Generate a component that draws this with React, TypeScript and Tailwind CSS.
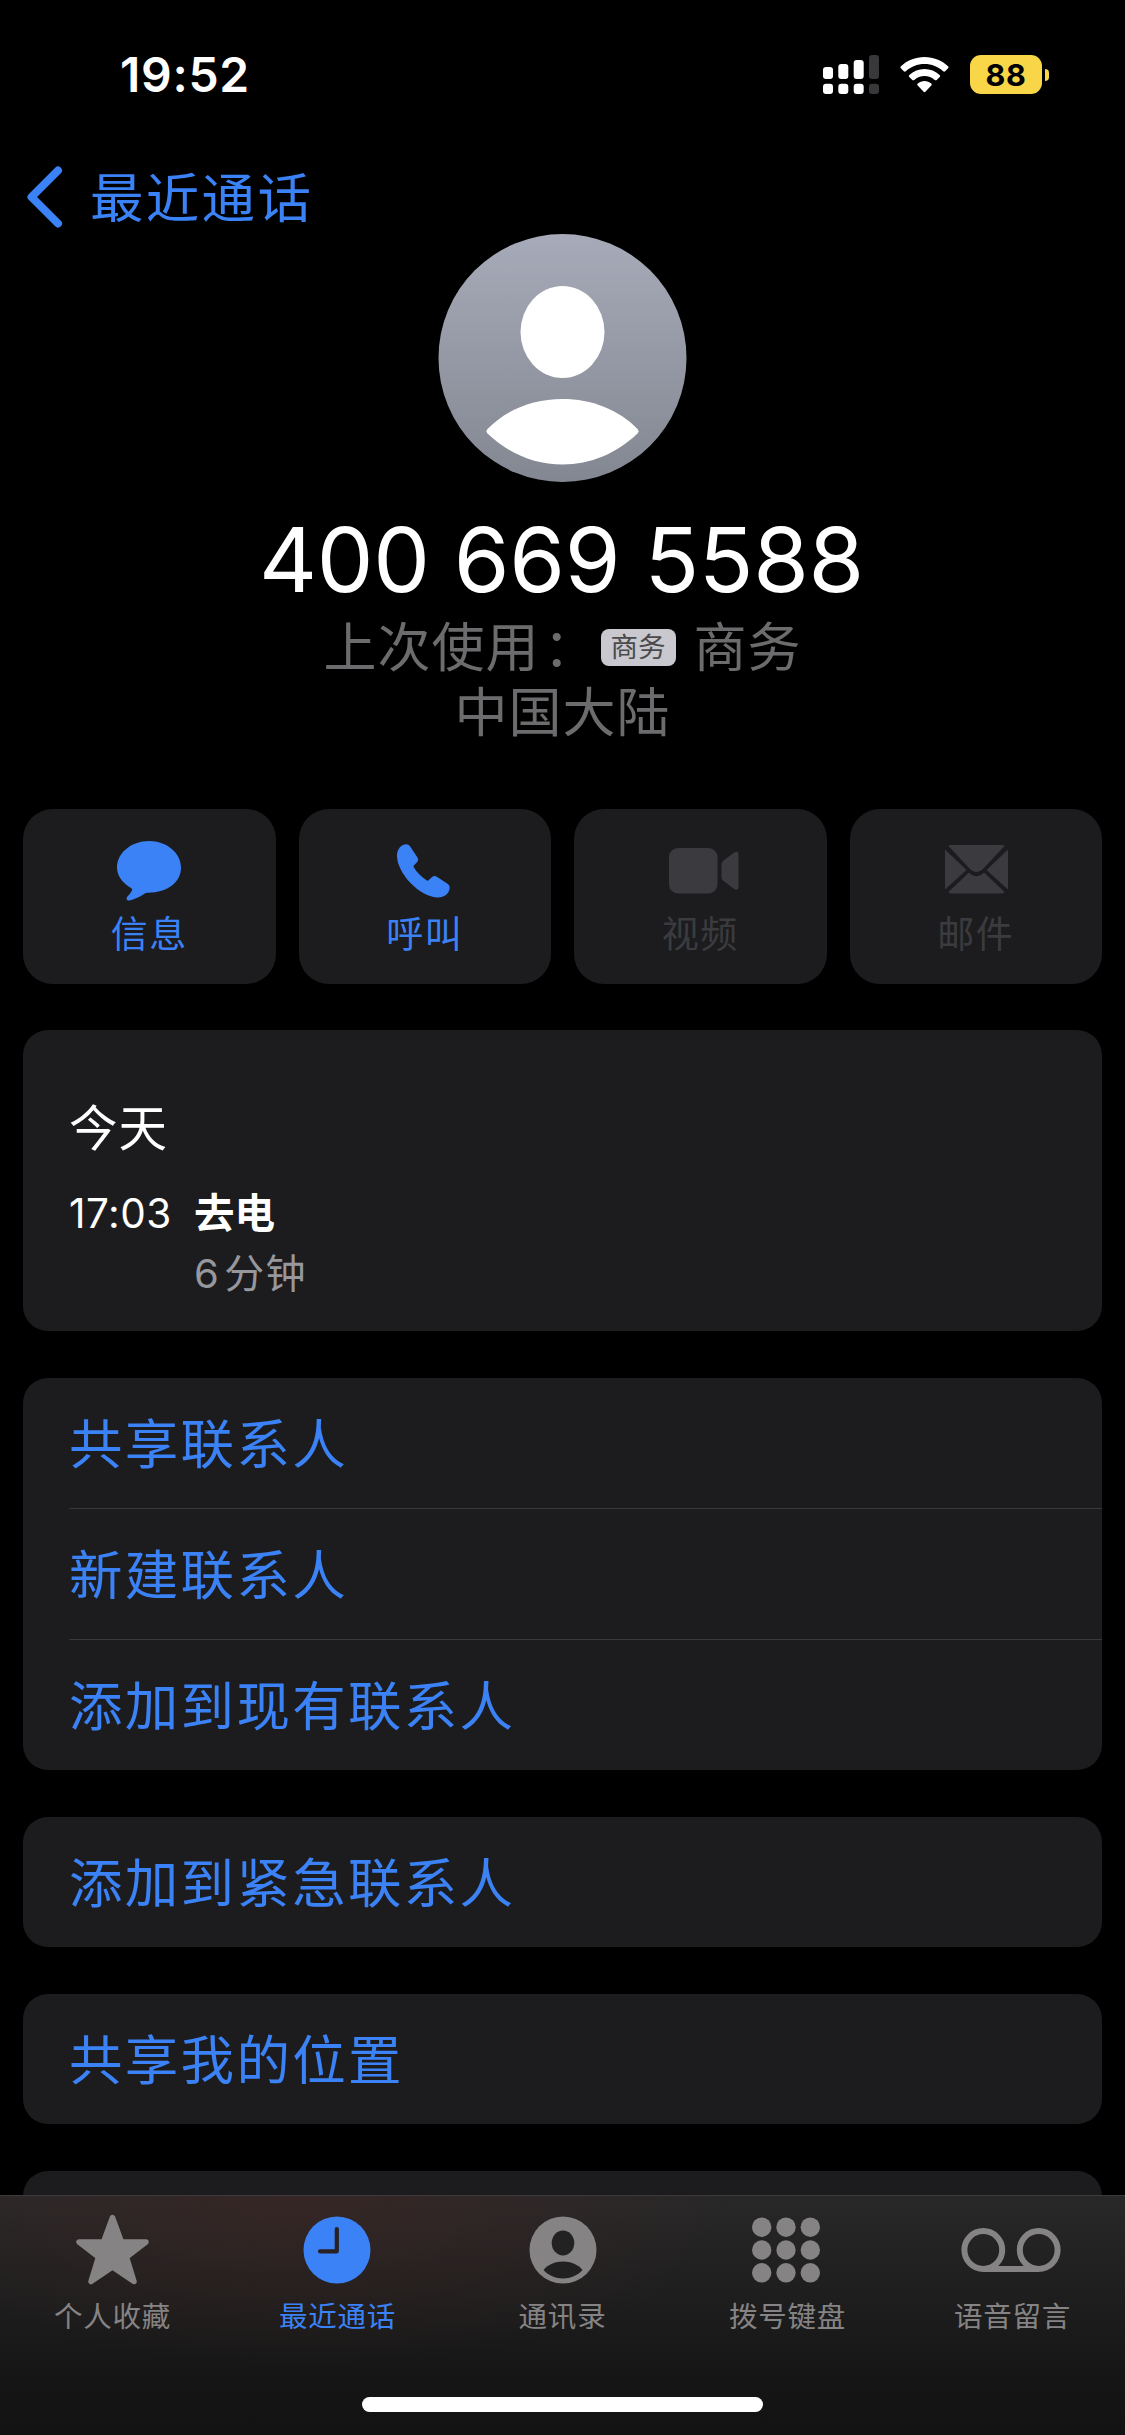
import type { ReactNode } from "react";

const FONT = "font-['Inter','Noto_Sans_CJK_SC',sans-serif]";

function StatusBar() {
  return (
    <div className="flex h-[150px] items-start pt-[45px] pl-[120px]">
      <div className="h-[60px] w-[703px] text-[48px] leading-[60px] font-semibold tracking-[0.7px] text-white">19:52</div>
      <svg className="mt-[10px] h-[40px] w-[56px] shrink-0" viewBox="0 0 56 40">
        <g fill="#fff">
          <rect x="0" y="12" width="10" height="12" rx="3" />
          <rect x="15.3" y="9" width="10" height="15" rx="3" />
          <rect x="30.7" y="5" width="10" height="19" rx="3" />
          <rect x="0" y="28.7" width="10" height="10.3" rx="3" />
          <rect x="15.3" y="28.7" width="10" height="10.3" rx="3" />
          <rect x="30.7" y="28.7" width="10" height="10.3" rx="3" />
        </g>
        <g fill="#38383a">
          <rect x="46" y="0" width="10" height="24" rx="3" />
          <rect x="46" y="28.7" width="10" height="10.3" rx="3" />
        </g>
      </svg>
      <svg className="mt-[11px] ml-[21px] h-[37px] w-[49px] shrink-0" viewBox="0 0 49 37">
        <g fill="#fff">
          <path d="M24.5 1C33.6 1 41.9 4.5 48 10.2C48.7 10.9 48.7 11.6 48.1 12.3L45.2 15.2C44.6 15.8 43.8 15.8 43.1 15.2C38.2 10.7 31.7 8 24.5 8S10.8 10.7 5.9 15.2C5.2 15.8 4.4 15.8 3.8 15.2L.9 12.3C.3 11.6 .3 10.9 1 10.2C7.1 4.5 15.4 1 24.5 1Z" />
          <path d="M24.5 13C30.3 13 35.6 15.2 39.6 18.9C40.3 19.6 40.3 20.3 39.7 20.9L36.7 23.9C36.1 24.5 35.4 24.5 34.7 23.9C32 21.5 28.4 20 24.5 20S17 21.5 14.3 23.9C13.6 24.5 12.9 24.5 12.3 23.9L9.3 20.9C8.7 20.3 8.7 19.6 9.4 18.9C13.4 15.2 18.7 13 24.5 13Z" />
          <path d="M24.5 25C27 25 29.4 26 31.2 27.5C31.9 28.2 31.9 28.8 31.3 29.4L25.6 35.6C24.9 36.3 24.1 36.3 23.4 35.6L17.7 29.4C17.1 28.8 17.1 28.2 17.8 27.5C19.6 26 22 25 24.5 25Z" />
        </g>
      </svg>
      <div className="mt-[10px] ml-[21px] flex h-[39px] shrink-0 items-center">
        <div className="flex h-[39px] w-[72px] items-center justify-center rounded-[11px] bg-[#f8d648] text-[30.5px] leading-[39px] font-bold tracking-[0.6px] text-black">
          88
        </div>
        <div className="ml-[3px] h-[12px] w-[4px] rounded-r-full bg-[#f8d648]" />
      </div>
    </div>
  );
}

function BackLink() {
  return (
    <div className="flex h-[84px] items-center pl-[26px] text-[#3b82f7]">
      <svg className="mt-[10px] h-[64px] w-[38px]" viewBox="0 0 38 64">
        <path d="M32 5.500L5.500 32L32 58.500" fill="none" stroke="currentColor" strokeWidth="8" strokeLinecap="round" strokeLinejoin="round" />
      </svg>
      <span className="mt-[13px] ml-[26px] text-[53.5px] leading-[64px] tracking-[2.3px]">最近通话</span>
    </div>
  );
}

function Avatar() {
  return (
    <svg className="ml-[438px] block h-[248px] w-[249px]" viewBox="-0.5 0 249 248">
      <defs>
        <linearGradient id="avatar" x1="0" y1="0" x2="0" y2="1">
          <stop offset="0" stopColor="#a7abb9" />
          <stop offset="1" stopColor="#838791" />
        </linearGradient>
      </defs>
      <circle cx="124" cy="124" r="124" fill="url(#avatar)" />
      <ellipse cx="124" cy="98" rx="42" ry="46" fill="#fff" />
      <path d="M49 195C68 175.500 95 165 124 165S180 175.500 199 195Q201 197.300 199 199.500C178 219.500 152 230.500 124 230.500S70 219.500 49 199.500Q47 197.300 49 195Z" fill="#fff" />
    </svg>
  );
}

function Identity() {
  return (
    <div className="flex flex-col items-center whitespace-nowrap">
      <div className="mt-[23px] h-[111px] pr-[2px] text-[90px] leading-[110px] tracking-[-0.3px] [word-spacing:-1px] text-white">
        400 669 5588
      </div>
      <div className="flex h-[65px] items-center text-[53px] leading-[65px] text-[#6c6c6e]">
        <span className="tracking-[1px]">
          上次使用<span className="mr-[-4px] ml-[4px]">：</span>
        </span>
        <span className="mt-[-2px] ml-[7px] flex h-[37px] w-[75px] items-center justify-center rounded-[8px] bg-[#c9c8ce] text-[27.5px] leading-[37px] text-[#4a4a4c]">
          商务
        </span>
        <span className="ml-[18px] tracking-[1px]">商务</span>
      </div>
      <div className="h-[65px] text-[53px] leading-[65px] tracking-[1px] text-[#6c6c6e]">中国大陆</div>
    </div>
  );
}

const icons: Record<string, ReactNode> = {
  message: (
    <svg className="h-[60px] w-[64px]" viewBox="0 0 64 60" fill="currentColor">
      <path d="M32 0C50 0 64 12.2 64 26.5S51 51.700 31 51.700C29.5 51.700 28.5 52 27.5 52.800C22 56.500 17 58.500 12.500 59.500C10 60 8.600 57.800 10.500 55.500C12.500 53.500 14 51.500 15 49.500C15.500 48.300 15 47.500 14 46.900C5.500 42 0 34.800 0 26.500C0 12.200 14 0 32 0Z" />
    </svg>
  ),
  call: (
    <svg className="mr-[2px] h-[58px] w-[53px]" viewBox="0 -2 53 58" fill="currentColor">
      <path d="M6.500 .800C9.500 -.500 12 .500 13.500 3L20.300 13.300C21.500 15.200 21.300 16.800 20 18.200L17 21.200C16.400 21.900 16.400 22.600 16.900 23.500C20 28.700 24.500 32.800 29.500 36.300C30.300 36.800 31.100 36.800 31.800 36.100L34.800 33.200C36.500 31.800 38 31.600 39.800 32.700L50.500 39.800C52.500 41.200 53.200 43.300 52.300 46C50.700 50.700 46.500 53.500 41 53.500C32 53.500 21 47 13 38.500C5.500 30.500 0 20 0 12C0 6.500 2.500 2.400 6.500 .800Z" />
    </svg>
  ),
  video: (
    <svg className="ml-[7px] h-[46px] w-[70px]" viewBox="0 0 70 46" fill="currentColor">
      <rect x="0" y="0" width="48.5" height="45.5" rx="9" />
      <path d="M52.500 16.500Q52.500 14.500 54 13L64.500 5Q69.500 1.800 69.500 7V38.500Q69.500 43.700 64.500 40.500L54 32.500Q52.500 31 52.500 29Z" />
    </svg>
  ),
  mail: (
    <svg className="ml-[1px] h-[52px] w-[63px]" viewBox="0 1 63 52" fill="currentColor">
      <path d="M3.500 2Q4.500 .500 7 .500H56Q58.500 .500 59.500 2L38 25Q31.500 31.500 25 25Z" />
      <path d="M0 5.500L21.500 26L0 45.500Z" />
      <path d="M63 5.500L41.500 26L63 45.500Z" />
      <path d="M3.500 48L24 28.500Q31.500 36 39 28.500L59.500 48Q58.500 49.500 56 49.500H7Q4.500 49.500 3.500 48Z" />
    </svg>
  ),
};

const actions = [
  { id: "message", label: "信息", enabled: true },
  { id: "call", label: "呼叫", enabled: true },
  { id: "video", label: "视频", enabled: false },
  { id: "mail", label: "邮件", enabled: false },
];

function ActionRow() {
  return (
    <div className="mt-[63px] grid h-[175px] grid-cols-4 gap-[23px]">
      {actions.map((a) => (
        <div
          key={a.id}
          className={
            "flex flex-col items-center rounded-[30px] bg-[#1c1c1e] pt-[32px] " +
            (a.enabled ? "text-[#3b82f7]" : "text-[#3b3b3f]")
          }
        >
          <div className="flex h-[60px] items-center">{icons[a.id]}</div>
          <span className="mt-[12px] text-[37px] leading-[44px] tracking-[1.5px]">{a.label}</span>
        </div>
      ))}
    </div>
  );
}

function CallLog() {
  return (
    <div className="mt-[46px] h-[301px] rounded-[25px] bg-[#1c1c1e] px-[46px] pt-[69px]">
      <div className="h-[60px] text-[48.5px] leading-[60px] tracking-[1px] text-white">今天</div>
      <div className="mt-[25px] flex">
        <div className="w-[125px] text-[40.5px] leading-[60px] tracking-[0.5px] text-white">17:03</div>
        <div>
          <div className="text-[40.5px] leading-[60px] font-bold text-white">去电</div>
          <div className="text-[40px] leading-[60px] tracking-[1.4px] text-[#97979e]">
            6<span className="ml-[4px]">分钟</span>
          </div>
        </div>
      </div>
    </div>
  );
}

function ListCard({ items }: { items: string[] }) {
  return (
    <div className="mt-[47px] rounded-[25px] bg-[#1c1c1e] pl-[46px] text-[#3b82f7]">
      {items.map((item, i) => (
        <div
          key={item}
          className={
            "flex items-center pt-[3px] text-[53.5px] leading-[64px] tracking-[2.3px] " +
            (i < items.length - 1 ? "h-[131px] border-b border-[#39393c]" : "h-[130px]")
          }
        >
          {item}
        </div>
      ))}
    </div>
  );
}

const tabs = [
  {
    label: "个人收藏",
    icon: (
      <svg className="mr-[1px] h-[72px] w-[75px]" viewBox="0 0 75 72" fill="currentColor">
        <path
          d="M37.500 3.500L46.500 28H71L51.500 43L59 67.500L37.500 53L16 67.500L23.500 43L4 28H28.500Z"
          stroke="currentColor"
          strokeWidth="5.5"
          strokeLinejoin="round"
        />
      </svg>
    ),
  },
  {
    label: "最近通话",
    active: true,
    icon: (
      <svg className="mr-[2px] h-[68px] w-[68px]" viewBox="0 0 68 68">
        <circle cx="34" cy="34" r="33.5" fill="currentColor" />
        <path d="M33.800 13V35.300H17" fill="none" stroke="#292122" strokeWidth="4.2" strokeLinecap="round" strokeLinejoin="round" />
      </svg>
    ),
  },
  {
    label: "通讯录",
    icon: (
      <svg className="h-[68px] w-[68px]" viewBox="0 0 68 68">
        <circle cx="34" cy="34" r="33.5" fill="currentColor" />
        <ellipse cx="34" cy="27" rx="11.3" ry="12.5" fill="#222223" />
        <path d="M14.500 54C19 48.500 26 45.500 34 45.500S49 48.500 53.500 54C48.500 59.500 41.500 62.500 34 62.500S19.500 59.500 14.500 54Z" fill="#212122" />
      </svg>
    ),
  },
  {
    label: "拨号键盘",
    icon: (
      <svg className="mr-[3px] h-[68px] w-[68px]" viewBox="0 0 68 68" fill="currentColor">
        {[9.7, 34, 58.3].map((cx) =>
          [11.2, 34, 56.8].map((cy) => <circle key={cx + "-" + cy} cx={cx} cy={cy} r="9.7" />),
        )}
      </svg>
    ),
  },
  {
    label: "语音留言",
    icon: (
      <svg className="mr-[3px] h-[44px] w-[100px]" viewBox="0 0 100 44" fill="none" stroke="currentColor" strokeWidth="6">
        <circle cx="22.3" cy="22" r="18.9" />
        <circle cx="77.7" cy="22" r="18.9" />
        <path d="M22 40.900H78" />
      </svg>
    ),
  },
];

function TabBar() {
  return (
    <div className="absolute inset-x-0 bottom-0 flex h-[240px] flex-col items-center border-t border-[#3e3a3b] bg-[radial-gradient(ellipse_450px_170px_at_300px_0px,rgba(68,38,34,0.5),rgba(68,38,34,0)),linear-gradient(to_bottom,#282829,#161616_75%,#121212)]">
      <div className="flex w-full">
        {tabs.map((t) => (
          <div
            key={t.label}
            className={"flex w-[225px] flex-col items-center " + (t.active ? "text-[#3b82f7]" : "text-[#858384]")}
          >
            <div className="mt-[16px] flex h-[76px] items-center">{t.icon}</div>
            <span className="mt-[11px] text-[28.5px] leading-[36px] tracking-[0.8px]">{t.label}</span>
          </div>
        ))}
      </div>
      <div className="mt-[62px] h-[15px] w-[401px] rounded-full bg-white" />
    </div>
  );
}

export default function App() {
  return (
    <div className={"relative h-[2435px] w-[1125px] overflow-hidden bg-black " + FONT}>
      <StatusBar />
      <BackLink />
      <Avatar />
      <Identity />
      <div className="px-[23px]">
        <ActionRow />
        <CallLog />
        <ListCard items={["共享联系人", "新建联系人", "添加到现有联系人"]} />
        <ListCard items={["添加到紧急联系人"]} />
        <ListCard items={["共享我的位置"]} />
        <div className="mt-[47px] h-[130px] rounded-[25px] bg-[#1c1c1e]" />
      </div>
      <TabBar />
    </div>
  );
}
